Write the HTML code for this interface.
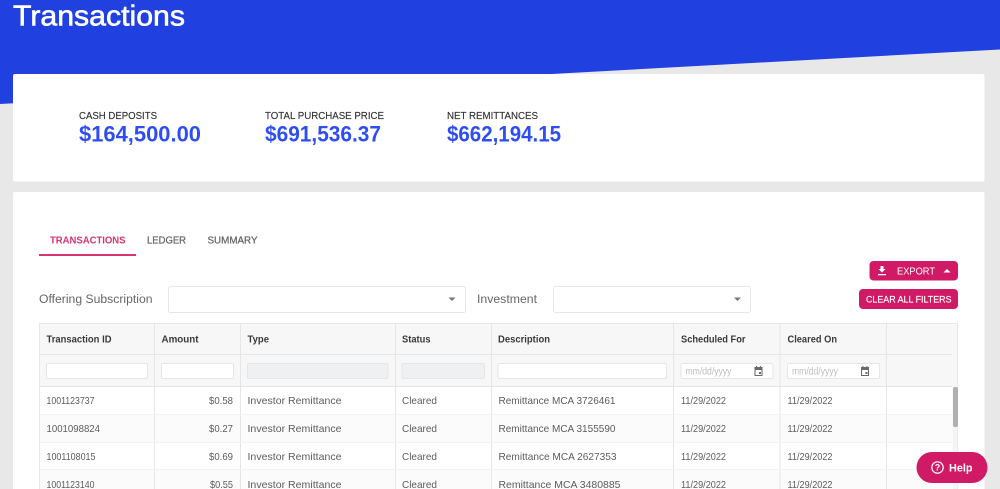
<!DOCTYPE html>
<html><head><meta charset="utf-8"><title>Transactions</title>
<style>
html,body{margin:0;padding:0;width:1000px;height:489px;overflow:hidden;background:#e8e8e8}
svg{display:block}
text{font-family:"Liberation Sans",sans-serif}
.h{font-size:10px;font-weight:700;fill:#3a3a3a}
.c{font-size:10.5px;fill:#5c5c5c}
.l{fill:none;stroke:#e6e6e6;stroke-width:1}
.i{fill:#fff;stroke:#e6e6e6}
.d{font-size:10px;fill:#bdbdbd}
.s{font-size:10.5px;fill:#333;stroke:#333;stroke-width:.15}
.a{font-size:22px;font-weight:700;fill:#2e4df2}
</style></head><body>
<svg width="1000" height="489" viewBox="0 0 1000 489" xmlns="http://www.w3.org/2000/svg">
<rect width="1000" height="489" fill="#e8e8e8"/>
<polygon points="0,0 1000,0 1000,49.500 0,104" fill="#2040e0"/>
<text x="13" y="25.500" font-size="29" fill="#fff" stroke="#fff" stroke-width=".6" textLength="172" lengthAdjust="spacingAndGlyphs">Transactions</text>

<rect x="13" y="74" width="971.500" height="107.500" rx="2" fill="#fff"/>
<rect x="13" y="192" width="971.500" height="300" rx="2" fill="#fff"/>

<text class="s" x="79" y="119" textLength="78" lengthAdjust="spacingAndGlyphs">CASH DEPOSITS</text>
<text class="s" x="265" y="119" textLength="119" lengthAdjust="spacingAndGlyphs">TOTAL PURCHASE PRICE</text>
<text class="s" x="447" y="119" textLength="91" lengthAdjust="spacingAndGlyphs">NET REMITTANCES</text>
<text class="a" x="79" y="141.500" textLength="122" lengthAdjust="spacingAndGlyphs">$164,500.00</text>
<text class="a" x="265" y="141.500" textLength="116" lengthAdjust="spacingAndGlyphs">$691,536.37</text>
<text class="a" x="447" y="141.500" textLength="114" lengthAdjust="spacingAndGlyphs">$662,194.15</text>

<text x="50" y="243.500" font-size="10" font-weight="700" fill="#d8326f" textLength="75.500" lengthAdjust="spacingAndGlyphs">TRANSACTIONS</text>
<text x="147" y="243.500" font-size="10" fill="#666" stroke="#666" stroke-width=".25" textLength="39" lengthAdjust="spacingAndGlyphs">LEDGER</text>
<text x="207.500" y="243.500" font-size="10" fill="#666" stroke="#666" stroke-width=".25" textLength="50" lengthAdjust="spacingAndGlyphs">SUMMARY</text>
<rect x="39" y="254" width="97" height="2" fill="#d8326f"/>

<text x="39" y="303" font-size="11.500" fill="#666" textLength="113.500" lengthAdjust="spacingAndGlyphs">Offering Subscription</text>
<rect x="168.500" y="286.500" width="297" height="26" rx="2" class="i"/>
<polygon points="448.500,297.500 455.500,297.500 452,301" fill="#777"/>
<text x="477" y="303" font-size="11.500" fill="#666" textLength="60" lengthAdjust="spacingAndGlyphs">Investment</text>
<rect x="553.500" y="286.500" width="197" height="26" rx="2" class="i"/>
<polygon points="734,297.500 741,297.500 737.500,301" fill="#777"/>

<rect x="869.500" y="261" width="88.500" height="19.500" rx="4" fill="#d01a65"/>
<path d="M880.500 266h3v3h2l-3.500 3.500-3.500-3.500h2zM878 274h8v1.300h-8z" fill="#fff"/>
<text x="897" y="274.500" font-size="10" fill="#fff" textLength="38" lengthAdjust="spacingAndGlyphs">EXPORT</text>
<polygon points="943.500,272.500 950.500,272.500 947,269" fill="#fff"/>
<rect x="859" y="289" width="99" height="20" rx="4" fill="#d01a65"/>
<text x="866" y="302.500" font-size="9.500" fill="#fff" stroke="#fff" stroke-width=".15" textLength="85.500" lengthAdjust="spacingAndGlyphs">CLEAR ALL FILTERS</text>

<rect x="39.500" y="323.500" width="918" height="63" fill="#f7f7f7"/>
<rect x="40" y="414.500" width="912" height="27.500" fill="#fbfbfb"/>
<rect x="40" y="470" width="912" height="20" fill="#fbfbfb"/>
<path class="l" d="M39.500 323.500H957.500V489M39.500 323.500V489M39.500 354.500H952M39.500 386.500H952"/>
<path class="l" d="M154.500 323.500V489M240.500 323.500V489M395.500 323.500V489M491.500 323.500V489M673.500 323.500V489M780 323.500V489M886.500 323.500V489"/>
<path d="M40 414.500H952M40 442.500H952M40 469.500H952" fill="none" stroke="#f3f3f3"/>

<text class="h" x="46.500" y="342.500" textLength="65" lengthAdjust="spacingAndGlyphs">Transaction ID</text>
<text class="h" x="161.500" y="342.500" textLength="37" lengthAdjust="spacingAndGlyphs">Amount</text>
<text class="h" x="247.500" y="342.500" textLength="21.500" lengthAdjust="spacingAndGlyphs">Type</text>
<text class="h" x="402" y="342.500" textLength="28.500" lengthAdjust="spacingAndGlyphs">Status</text>
<text class="h" x="498" y="342.500" textLength="52" lengthAdjust="spacingAndGlyphs">Description</text>
<text class="h" x="681" y="342.500" textLength="64.500" lengthAdjust="spacingAndGlyphs">Scheduled For</text>
<text class="h" x="787.500" y="342.500" textLength="49.500" lengthAdjust="spacingAndGlyphs">Cleared On</text>

<rect class="i" x="46.500" y="363.500" width="101" height="15" rx="1.500"/>
<rect class="i" x="161.500" y="363.500" width="72" height="15" rx="1.500"/>
<rect x="247.500" y="363.500" width="140.500" height="15" rx="1.500" fill="#eff0f2" stroke="#e6e6e6"/>
<rect x="402" y="363.500" width="82.500" height="15" rx="1.500" fill="#eff0f2" stroke="#e6e6e6"/>
<rect class="i" x="498" y="363.500" width="168.500" height="15" rx="1.500"/>
<rect class="i" x="681" y="363.500" width="92" height="15" rx="1.500"/>
<rect class="i" x="787.500" y="363.500" width="92" height="15" rx="1.500"/>
<text class="d" x="685.500" y="374.500" textLength="46" lengthAdjust="spacingAndGlyphs">mm/dd/yyyy</text>
<text class="d" x="792" y="374.500" textLength="46" lengthAdjust="spacingAndGlyphs">mm/dd/yyyy</text>
<path d="M754.500 367h1.500v-1h1v1h3v-1h1v1h1.500v9h-8zM755.500 370v5h6v-5zM759 372h2v2h-2z" fill="#6a6a6a" fill-rule="evenodd"/>
<path d="M861 367h1.500v-1h1v1h3v-1h1v1h1.500v9h-8zM862 370v5h6v-5zM865.500 372h2v2h-2z" fill="#6a6a6a" fill-rule="evenodd"/>

<text class="c" x="46.500" y="404" textLength="48" lengthAdjust="spacingAndGlyphs">1001123737</text>
<text class="c" x="233" y="404" text-anchor="end" textLength="24" lengthAdjust="spacingAndGlyphs">$0.58</text>
<text class="c" x="247.500" y="404" textLength="94" lengthAdjust="spacingAndGlyphs">Investor Remittance</text>
<text class="c" x="402" y="404" textLength="35" lengthAdjust="spacingAndGlyphs">Cleared</text>
<text class="c" x="498.500" y="404" textLength="117" lengthAdjust="spacingAndGlyphs">Remittance MCA 3726461</text>
<text class="c" x="681" y="404" textLength="45" lengthAdjust="spacingAndGlyphs">11/29/2022</text>
<text class="c" x="787.500" y="404" textLength="45" lengthAdjust="spacingAndGlyphs">11/29/2022</text>

<text class="c" x="46.500" y="432" textLength="53.500" lengthAdjust="spacingAndGlyphs">1001098824</text>
<text class="c" x="233" y="432" text-anchor="end" textLength="24" lengthAdjust="spacingAndGlyphs">$0.27</text>
<text class="c" x="247.500" y="432" textLength="94" lengthAdjust="spacingAndGlyphs">Investor Remittance</text>
<text class="c" x="402" y="432" textLength="35" lengthAdjust="spacingAndGlyphs">Cleared</text>
<text class="c" x="498.500" y="432" textLength="117" lengthAdjust="spacingAndGlyphs">Remittance MCA 3155590</text>
<text class="c" x="681" y="432" textLength="45" lengthAdjust="spacingAndGlyphs">11/29/2022</text>
<text class="c" x="787.500" y="432" textLength="45" lengthAdjust="spacingAndGlyphs">11/29/2022</text>

<text class="c" x="46.500" y="460" textLength="49" lengthAdjust="spacingAndGlyphs">1001108015</text>
<text class="c" x="233" y="460" text-anchor="end" textLength="24" lengthAdjust="spacingAndGlyphs">$0.69</text>
<text class="c" x="247.500" y="460" textLength="94" lengthAdjust="spacingAndGlyphs">Investor Remittance</text>
<text class="c" x="402" y="460" textLength="35" lengthAdjust="spacingAndGlyphs">Cleared</text>
<text class="c" x="498.500" y="460" textLength="118" lengthAdjust="spacingAndGlyphs">Remittance MCA 2627353</text>
<text class="c" x="681" y="460" textLength="45" lengthAdjust="spacingAndGlyphs">11/29/2022</text>
<text class="c" x="787.500" y="460" textLength="45" lengthAdjust="spacingAndGlyphs">11/29/2022</text>

<text class="c" x="46.500" y="488" textLength="48" lengthAdjust="spacingAndGlyphs">1001123140</text>
<text class="c" x="233" y="488" text-anchor="end" textLength="23" lengthAdjust="spacingAndGlyphs">$0.55</text>
<text class="c" x="247.500" y="488" textLength="94" lengthAdjust="spacingAndGlyphs">Investor Remittance</text>
<text class="c" x="402" y="488" textLength="35" lengthAdjust="spacingAndGlyphs">Cleared</text>
<text class="c" x="498.500" y="488" textLength="122" lengthAdjust="spacingAndGlyphs">Remittance MCA 3480885</text>
<text class="c" x="681" y="488" textLength="45" lengthAdjust="spacingAndGlyphs">11/29/2022</text>
<text class="c" x="787.500" y="488" textLength="45" lengthAdjust="spacingAndGlyphs">11/29/2022</text>

<rect x="952.500" y="387" width="5" height="102" fill="#f4f4f4"/>
<rect x="953" y="387" width="5" height="40" rx="2" fill="#b0b0b0"/>

<rect x="916.500" y="452" width="71" height="31" rx="15.500" fill="#d01a65"/>
<circle cx="937.500" cy="467.500" r="5.700" fill="none" stroke="#fff" stroke-width="1.200"/>
<text x="937.500" y="470.700" font-size="9" font-weight="700" fill="#fff" text-anchor="middle">?</text>
<text x="949" y="471.500" font-size="11" font-weight="700" fill="#fff" textLength="23.500" lengthAdjust="spacingAndGlyphs">Help</text>
</svg>
</body></html>
